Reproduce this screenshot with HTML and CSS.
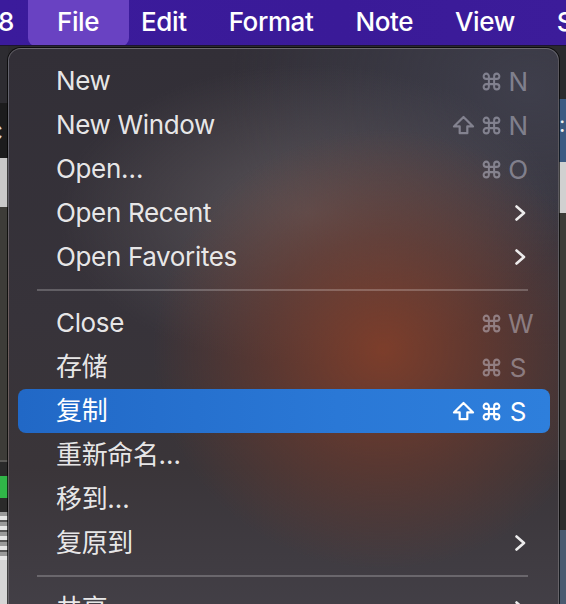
FILE: index.html
```html
<!DOCTYPE html>
<html>
<head>
	<meta charset="utf-8">
	<title>File menu</title>
	<link rel="stylesheet" href="styles.css">
</head>
<body>
<div class="menubar">
	<span class="bar-item first">8</span>
	<span class="bar-item active">File</span>
	<span class="bar-item">Edit</span>
	<span class="bar-item">Format</span>
	<span class="bar-item">Note</span>
	<span class="bar-item">View</span>
	<span class="bar-item">S</span>
</div>

<div class="backdrop">
	<div class="strip strip-left">
		<div class="band b-dark"></div>
		<div class="band b-black"><span class="peek">c</span></div>
		<div class="band b-light"></div>
		<div class="band b-olive"></div>
		<div class="band b-rule"></div>
		<div class="band b-gap"></div>
		<div class="band b-green"></div>
		<div class="band b-gap2"></div>
		<div class="band b-stripes"></div>
		<div class="band b-paper"></div>
	</div>
	<div class="strip-mid"></div>
	<div class="strip strip-right">
		<div class="band r-dark"></div>
		<div class="band r-blue"><span class="dots">:</span></div>
		<div class="band r-light"></div>
		<div class="band r-olive"></div>
		<div class="band r-gap"></div>
		<div class="band r-slate"></div>
	</div>
</div>

<div class="menu">
	<div class="row">
		<span class="label">New</span>
		<span class="keys"><svg class="cmd" viewBox="0 0 24 24"><path d="M18 3a3 3 0 0 0-3 3v12a3 3 0 0 0 3 3 3 3 0 0 0 3-3 3 3 0 0 0-3-3H6a3 3 0 0 0-3 3 3 3 0 0 0 3 3 3 3 0 0 0 3-3V6a3 3 0 0 0-3-3 3 3 0 0 0-3 3 3 3 0 0 0 3 3h12a3 3 0 0 0 3-3 3 3 0 0 0-3-3z"/></svg><span class="key">N</span></span>
	</div>
	<div class="row">
		<span class="label">New Window</span>
		<span class="keys"><svg class="shift" viewBox="0 0 24 22"><path d="M12 2 2 12h6v7h8v-7h6z"/></svg><svg class="cmd" viewBox="0 0 24 24"><path d="M18 3a3 3 0 0 0-3 3v12a3 3 0 0 0 3 3 3 3 0 0 0 3-3 3 3 0 0 0-3-3H6a3 3 0 0 0-3 3 3 3 0 0 0 3 3 3 3 0 0 0 3-3V6a3 3 0 0 0-3-3 3 3 0 0 0-3 3 3 3 0 0 0 3 3h12a3 3 0 0 0 3-3 3 3 0 0 0-3-3z"/></svg><span class="key">N</span></span>
	</div>
	<div class="row">
		<span class="label">Open…</span>
		<span class="keys"><svg class="cmd" viewBox="0 0 24 24"><path d="M18 3a3 3 0 0 0-3 3v12a3 3 0 0 0 3 3 3 3 0 0 0 3-3 3 3 0 0 0-3-3H6a3 3 0 0 0-3 3 3 3 0 0 0 3 3 3 3 0 0 0 3-3V6a3 3 0 0 0-3-3 3 3 0 0 0-3 3 3 3 0 0 0 3 3h12a3 3 0 0 0 3-3 3 3 0 0 0-3-3z"/></svg><span class="key">O</span></span>
	</div>
	<div class="row">
		<span class="label">Open Recent</span>
		<svg class="chevron" viewBox="0 0 12 16"><path d="M2 1.5 9.5 8 2 14.5"/></svg>
	</div>
	<div class="row">
		<span class="label">Open Favorites</span>
		<svg class="chevron" viewBox="0 0 12 16"><path d="M2 1.5 9.5 8 2 14.5"/></svg>
	</div>

	<div class="sep"></div>

	<div class="row">
		<span class="label">Close</span>
		<span class="keys"><svg class="cmd" viewBox="0 0 24 24"><path d="M18 3a3 3 0 0 0-3 3v12a3 3 0 0 0 3 3 3 3 0 0 0 3-3 3 3 0 0 0-3-3H6a3 3 0 0 0-3 3 3 3 0 0 0 3 3 3 3 0 0 0 3-3V6a3 3 0 0 0-3-3 3 3 0 0 0-3 3 3 3 0 0 0 3 3h12a3 3 0 0 0 3-3 3 3 0 0 0-3-3z"/></svg><span class="key">W</span></span>
	</div>
	<div class="row">
		<span class="label">存储</span>
		<span class="keys"><svg class="cmd" viewBox="0 0 24 24"><path d="M18 3a3 3 0 0 0-3 3v12a3 3 0 0 0 3 3 3 3 0 0 0 3-3 3 3 0 0 0-3-3H6a3 3 0 0 0-3 3 3 3 0 0 0 3 3 3 3 0 0 0 3-3V6a3 3 0 0 0-3-3 3 3 0 0 0-3 3 3 3 0 0 0 3 3h12a3 3 0 0 0 3-3 3 3 0 0 0-3-3z"/></svg><span class="key">S</span></span>
	</div>
	<div class="row selected">
		<span class="label">复制</span>
		<span class="keys"><svg class="shift" viewBox="0 0 24 22"><path d="M12 2 2 12h6v7h8v-7h6z"/></svg><svg class="cmd" viewBox="0 0 24 24"><path d="M18 3a3 3 0 0 0-3 3v12a3 3 0 0 0 3 3 3 3 0 0 0 3-3 3 3 0 0 0-3-3H6a3 3 0 0 0-3 3 3 3 0 0 0 3 3 3 3 0 0 0 3-3V6a3 3 0 0 0-3-3 3 3 0 0 0-3 3 3 3 0 0 0 3 3h12a3 3 0 0 0 3-3 3 3 0 0 0-3-3z"/></svg><span class="key">S</span></span>
	</div>
	<div class="row">
		<span class="label">重新命名…</span>
	</div>
	<div class="row">
		<span class="label">移到…</span>
	</div>
	<div class="row">
		<span class="label">复原到</span>
		<svg class="chevron" viewBox="0 0 12 16"><path d="M2 1.5 9.5 8 2 14.5"/></svg>
	</div>

	<div class="sep"></div>

	<div class="row">
		<span class="label">共享</span>
		<svg class="chevron" viewBox="0 0 12 16"><path d="M2 1.5 9.5 8 2 14.5"/></svg>
	</div>
</div>
</body>
</html>
```

FILE: styles.css
```css
* {
	margin: 0;
	padding: 0;
	box-sizing: border-box;
}
body {
	width: 566px;
	height: 604px;
	overflow: hidden;
	position: relative;
	background: #2b2a2e;
	font-family: Inter, "Noto Sans CJK SC", sans-serif;
	-webkit-font-smoothing: antialiased;
}

/* top menu bar */
.menubar {
	height: 46px;
	display: flex;
	align-items: center;
	background: linear-gradient(90deg, #3b1b9c, #3a1a98 60%, #3c1c9a);
	color: #fff;
	font-size: 26px;
	font-weight: 500;
	letter-spacing: -0.4px;
	border-bottom: 1px solid #1c1530;
	overflow: hidden;
}
.bar-item {
	height: 46px;
	line-height: 44px;
	padding: 0 21px;
	white-space: nowrap;
	flex: none;
}
.bar-item.first {
	padding-left: 0;
	margin-left: -2px;
}
.bar-item.active {
	background: #6942c2;
	border-radius: 0 0 8px 8px;
	padding: 0 30px 0 29px;
	margin: 0 -9px 0 -7px;
}

/* whatever lies under the menu */
.backdrop {
	display: grid;
	grid-template-columns: 8px 1fr 7px;
	height: 558px;
}
.strip {
	display: flex;
	flex-direction: column;
	overflow: hidden;
}
.band {
	flex: none;
}
.b-dark { height: 57px; background: #2d2c31; }
.b-black { height: 55px; background: #1c1c1d; }
.b-light { height: 49px; background: #c9c9c9; }
.b-olive { height: 253px; background: #3d3c38; }
.b-rule { height: 2px; background: #5b5a57; }
.b-gap { height: 14px; background: #2a2a2a; }
.b-green { height: 22px; background: #30b648; }
.b-gap2 { height: 14px; background: #2a2a2a; }
.b-stripes {
	height: 48px;
	background: repeating-linear-gradient(#9a9a9a 0 4px, #e6e6e6 4px 8px, #555 8px 10px);
}
.b-paper { height: 44px; background: #d6d6d6; }
.peek {
	display: block;
	color: #ddd;
	font-size: 26px;
	line-height: 55px;
	margin-left: -12px;
}
.r-dark { height: 53px; background: #2a2a2e; }
.r-blue { height: 63px; background: #3b5a82; color: #eee; font-size: 22px; line-height: 50px; }
.r-light { height: 51px; background: #d0d0d0; }
.r-olive { height: 247px; background: #3d3c38; }
.r-gap { height: 70px; background: #2d2d2e; }
.r-slate { height: 80px; background: #4a5a70; }

/* the dropdown, over the window */
.menu {
	position: absolute;
	top: 48px;
	left: 8px;
	width: 551px;
	height: 600px;
	padding: 10px 8px 0 9px;
	border-radius: 13px;
	border: 1px solid rgba(255, 255, 255, 0.2);
	box-shadow: 0 0 0 1px rgba(0, 0, 0, 0.7);
	background:
		radial-gradient(ellipse 230px 220px at 374px 300px, rgba(128, 62, 42, 0.95), rgba(112, 58, 44, 0.6) 50%, rgba(90, 50, 45, 0) 100%),
		radial-gradient(ellipse 250px 150px at 300px 165px, rgba(98, 92, 96, 0.8), rgba(80, 76, 82, 0) 100%),
		radial-gradient(ellipse 300px 260px at 520px 40px, rgba(70, 72, 88, 0.6), rgba(60, 60, 75, 0) 100%),
		linear-gradient(180deg, #322f37 0%, #37333a 45%, #3a3539 70%, #45424a 100%);
	color: rgba(255, 255, 255, 0.9);
	font-size: 26px;
	letter-spacing: -0.35px;
}
.row {
	height: 44px;
	display: flex;
	align-items: center;
	justify-content: space-between;
	padding: 0 22px 0 38px;
	border-radius: 8px;
	white-space: nowrap;
}
.label {
	line-height: 44px;
}
.row.selected {
	background: linear-gradient(90deg, #2168c6, #2a78d6 60%, #2e7fdc);
	color: #fff;
}
.keys {
	display: flex;
	align-items: center;
	color: rgba(225, 225, 240, 0.42);
}
.row.selected .keys {
	color: #fff;
}
.key {
	margin-left: 6px;
	width: 20px;
	text-align: center;
}
.cmd {
	width: 21px;
	height: 21px;
	fill: none;
	stroke: currentColor;
	stroke-width: 2.3;
}
.shift {
	width: 23px;
	height: 21px;
	margin-right: 6px;
	fill: none;
	stroke: currentColor;
	stroke-width: 2.3;
	stroke-linejoin: round;
}
.chevron {
	width: 13px;
	height: 16px;
	fill: none;
	stroke: rgba(255, 255, 255, 0.9);
	stroke-width: 2.6;
	stroke-linecap: round;
	stroke-linejoin: round;
	margin-right: 1px;
}
.sep {
	height: 22px;
	display: flex;
	align-items: center;
	padding: 0 22px 0 19px;
}
.sep::before {
	content: "";
	flex: 1;
	height: 2px;
	background: rgba(255, 255, 255, 0.22);
}
```
